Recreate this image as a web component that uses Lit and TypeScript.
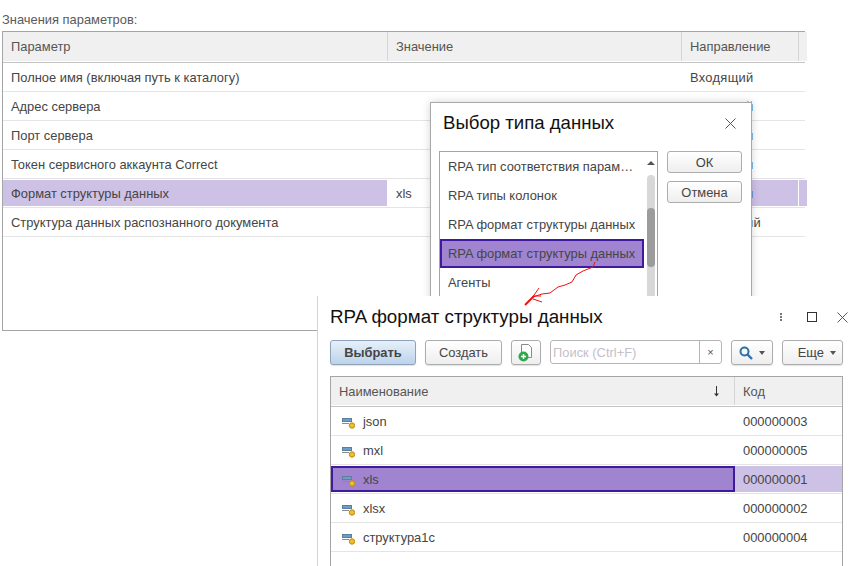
import { LitElement, html, css, svg } from "lit";
import { customElement } from "lit/decorators.js";

const params = [
  ["Полное имя (включая путь к каталогу)", "Входящий"],
  ["Адрес сервера", "Входящий"],
  ["Порт сервера", "Входящий"],
  ["Токен сервисного аккаунта Correct", "Входящий"],
  ["Формат структуры данных", "Входящий"],
  ["Структура данных распознанного документа", "Исходящий"],
];

const types = [
  "RPA тип соответствия парам…",
  "RPA типы колонок",
  "RPA формат структуры данных",
  "RPA формат структуры данных",
  "Агенты",
];

const formats = [
  ["json", "000000003"],
  ["mxl", "000000005"],
  ["xls", "000000001"],
  ["xlsx", "000000002"],
  ["структура1с", "000000004"],
];

const closeIcon = svg`<svg width="11" height="11" viewBox="0 0 11 11"><path d="M.5.5l10 10M10.5.5l-10 10" stroke="#555" fill="none"/></svg>`;

const itemIcon = html`<svg class="item-icon" width="16" height="17" viewBox="0 0 16 17">
  <rect x="3.5" y="5.5" width="9" height="3" fill="#6f9cc4" stroke="#5a7f9f"/>
  <rect x="3" y="10" width="7" height="1" fill="#8a8a8a"/>
  <circle cx="13" cy="12.5" r="2.7" fill="#f2bd2c" stroke="#b58a10"/>
</svg>`;

@customElement("app-root")
export class AppRoot extends LitElement {
  static styles = css`
    :host {
      display: block;
      position: relative;
      width: 858px;
      height: 566px;
      overflow: hidden;
      background: #fff;
      font-family: "Liberation Sans", Arial, sans-serif;
      font-size: 12.9px;
      color: #454545;
    }
    .page {
      padding: 12px 0 0 2px;
      width: 803px;
    }
    .caption {
      height: 19px;
      line-height: 15px;
      color: #5a5a5a;
    }
    .params {
      border-top: 1px solid #a5a5a5;
      border-left: 1px solid #a5a5a5;
      border-bottom: 1px solid #a5a5a5;
      box-sizing: border-box;
      height: 300px;
    }
    .row {
      display: grid;
      grid-template-columns: 385px 294px 117px 1fr;
      height: 29px;
      border-bottom: 1px solid #e4e4e4;
      box-sizing: border-box;
    }
    .row > div {
      padding-left: 8px;
      line-height: 30px;
      white-space: nowrap;
      overflow: hidden;
    }
    .row > .dir {
      letter-spacing: 0.3px;
    }
    .head {
      height: 31px;
      border-bottom: 1px solid #c4c4c4;
    }
    .head > div {
      background: #f0f0f0;
      border-right: 1px solid #d6d6d6;
      line-height: 30px;
      color: #555;
      margin-bottom: 1px;
    }
    .head > div:last-child {
      border-right: none;
    }
    .selected > div {
      background: #cdc1e6;
      margin: 1px 1px 1px 0;
      line-height: 28px;
    }
    .selected > div:last-child {
      margin-right: 0;
    }
    .selected > .current {
      background: #fff;
    }
    .dialog {
      position: absolute;
      left: 430px;
      top: 102px;
      width: 322px;
      height: 230px;
      box-sizing: border-box;
      background: #fff;
      border: 1px solid #a8a8a8;
      box-shadow: 0 0 8px rgba(0, 0, 0, 0.18);
      padding: 0 8px;
    }
    .title {
      font-size: 18.6px;
      color: #111;
      white-space: nowrap;
    }
    .dialog-head {
      display: flex;
      align-items: center;
      justify-content: space-between;
      height: 40px;
      padding: 0 7px 0 4px;
      margin-bottom: 8px;
    }
    .dialog-body {
      display: flex;
      gap: 9px;
    }
    .list {
      position: relative;
      width: 219px;
      height: 170px;
      box-sizing: border-box;
      border: 1px solid #a5a5a5;
    }
    .list-row {
      width: 204px;
      height: 29px;
      line-height: 30px;
      padding-left: 8px;
      box-sizing: border-box;
      white-space: nowrap;
    }
    .list-row.sel {
      background: #a084d0;
      outline: 2px solid #3f1a9c;
      outline-offset: -2px;
    }
    .scroll {
      position: absolute;
      left: 207px;
      top: 23px;
      width: 8px;
      height: 130px;
      border-radius: 4px;
      background: #d8d8d8;
    }
    .thumb {
      margin-top: 33px;
      height: 59px;
      border-radius: 4px;
      background: #9c9c9c;
    }
    .up {
      position: absolute;
      left: 207px;
      top: 9px;
      width: 0;
      height: 0;
      border: 4px solid transparent;
      border-top: 0;
      border-bottom: 4px solid #555;
    }
    .side {
      display: flex;
      flex-direction: column;
      gap: 8px;
    }
    .btn {
      box-sizing: border-box;
      height: 22px;
      line-height: 21px;
      text-align: center;
      border: 1px solid #adadad;
      border-radius: 3px;
      background: linear-gradient(#fff, #eee);
      color: #454545;
    }
    .side .btn {
      width: 75px;
    }
    .window {
      position: absolute;
      left: 317px;
      top: 296px;
      width: 541px;
      height: 270px;
      box-sizing: border-box;
      background: #fff;
      border-left: 1px solid #d4d4d4;
      padding-left: 12px;
    }
    .win-head {
      display: flex;
      align-items: center;
      height: 41px;
      padding-top: 1px;
      box-sizing: border-box;
    }
    .win-head .title {
      flex: 1;
      font-size: 18.8px;
    }
    .win-tools {
      display: flex;
      align-items: center;
      padding-right: 10px;
    }
    .dots {
      display: flex;
      flex-direction: column;
      gap: 1px;
      margin-right: 25px;
    }
    .dots i {
      width: 2px;
      height: 2px;
      background: #777;
    }
    .square {
      width: 8px;
      height: 8px;
      border: 1px solid #333;
      margin-right: 20px;
    }
    .toolbar {
      display: flex;
      height: 26px;
      margin: 3px 0 10px;
      gap: 9px;
    }
    .toolbar .btn {
      height: 25px;
      line-height: 24px;
      box-shadow: 0 1px 1px rgba(0, 0, 0, 0.12);
    }
    .toolbar .primary {
      width: 86px;
      font-weight: bold;
      background: linear-gradient(#e6f0fa, #bcd3ea);
      border-color: #8ea3b8;
    }
    .create {
      width: 77px;
    }
    .add {
      width: 30px;
      display: flex;
      align-items: center;
      justify-content: center;
    }
    .search {
      display: flex;
      width: 172px;
      height: 24px;
      box-sizing: border-box;
      border: 1px solid #b5b5b5;
      border-radius: 3px;
      line-height: 23px;
      color: #c4c0cc;
    }
    .search span {
      flex: 1;
      padding-left: 2px;
      white-space: nowrap;
    }
    .search b {
      width: 21px;
      border-left: 1px solid #b5b5b5;
      text-align: center;
      font-weight: normal;
      color: #555;
      font-size: 11px;
    }
    .find {
      width: 42px;
      display: flex;
      align-items: center;
      justify-content: center;
      gap: 6px;
    }
    .more {
      width: 61px;
      display: flex;
      align-items: center;
      justify-content: flex-end;
      gap: 6px;
      padding-right: 6px;
    }
    .caret {
      width: 0;
      height: 0;
      border: 3.5px solid transparent;
      border-bottom: 0;
      border-top: 4px solid #555;
    }
    .grid {
      width: 513px;
      height: 190px;
      box-sizing: border-box;
      border: 1px solid #a5a5a5;
      border-bottom: none;
    }
    .grid-row {
      display: grid;
      grid-template-columns: 404px 1fr;
      height: 29px;
      box-sizing: border-box;
      border-bottom: 1px solid #e4e4e4;
    }
    .grid-row > div {
      display: flex;
      align-items: center;
      padding: 1px 0 0 8px;
      white-space: nowrap;
    }
    .grid-head {
      height: 30px;
      border-bottom: 1px solid #c4c4c4;
    }
    .grid-head > div {
      background: #f0f0f0;
      color: #555;
      justify-content: space-between;
      margin-bottom: 1px;
      padding-top: 0;
    }
    .grid-head > div:first-child {
      border-right: 1px solid #d6d6d6;
      padding-right: 14px;
    }
    .grid-row.sel > div {
      background: #cdc1e6;
      margin: 1px 0;
    }
    .grid-row.sel > div:first-child {
      background: #a084d0;
      outline: 2px solid #3f1a9c;
      outline-offset: -2px;
    }
    .item-icon {
      margin-right: 8px;
      flex: none;
    }
    .scribble {
      position: absolute;
      left: 520px;
      top: 255px;
    }
  `;

  render() {
    return html`
      <div class="page">
        <div class="caption">Значения параметров:</div>
        <div class="params">
          <div class="row head">
            <div>Параметр</div>
            <div>Значение</div>
            <div>Направление</div>
            <div></div>
          </div>
          ${params.map(
            ([name, direction], i) => html`<div class="row ${i === 4 ? "selected" : ""}">
              <div>${name}</div>
              <div class="current">${i === 4 ? "xls" : ""}</div>
              <div class="dir">${direction}</div>
              <div></div>
            </div>`
          )}
        </div>
      </div>

      <div class="dialog">
        <div class="dialog-head">
          <span class="title">Выбор типа данных</span>
          ${closeIcon}
        </div>
        <div class="dialog-body">
          <div class="list">
            ${types.map(
              (t, i) => html`<div class="list-row ${i === 3 ? "sel" : ""}">${t}</div>`
            )}
            <div class="up"></div>
            <div class="scroll"><div class="thumb"></div></div>
          </div>
          <div class="side">
            <div class="btn">ОК</div>
            <div class="btn">Отмена</div>
          </div>
        </div>
      </div>

      <div class="window">
        <div class="win-head">
          <span class="title">RPA формат структуры данных</span>
          <div class="win-tools">
            <div class="dots"><i></i><i></i><i></i></div>
            <div class="square"></div>
            ${closeIcon}
          </div>
        </div>
        <div class="toolbar">
          <div class="btn primary">Выбрать</div>
          <div class="btn create">Создать</div>
          <div class="btn add">
            <svg width="16" height="18" viewBox="0 0 16 18">
              <path d="M3.5.5h7l3 3v10h-10z" fill="#fdfdfd" stroke="#8a8a8a"/>
              <circle cx="5.5" cy="12.5" r="5" fill="#2fa84a"/>
              <path d="M3 12.5h5M5.5 10v5" stroke="#fff" stroke-width="1.4"/>
            </svg>
          </div>
          <div class="search"><span>Поиск (Ctrl+F)</span><b>×</b></div>
          <div class="btn find">
            <svg width="14" height="14" viewBox="0 0 14 14">
              <circle cx="5.5" cy="5.5" r="4" fill="none" stroke="#2d6fa8" stroke-width="2"/>
              <path d="M8.5 8.5l4.5 4.5" stroke="#2d6fa8" stroke-width="2.4"/>
            </svg>
            <span class="caret"></span>
          </div>
          <div class="btn more">Еще <span class="caret"></span></div>
        </div>
        <div class="grid">
          <div class="grid-row grid-head">
            <div>
              Наименование
              <svg width="7" height="11" viewBox="0 0 7 11">
                <path d="M3.5 0v10" stroke="#333" fill="none"/>
                <path d="M1 7.5h5l-2.5 3z" fill="#333"/>
              </svg>
            </div>
            <div>Код</div>
          </div>
          ${formats.map(
            ([name, code], i) => html`<div class="grid-row ${i === 2 ? "sel" : ""}">
              <div>${itemIcon}${name}</div>
              <div>${code}</div>
            </div>`
          )}
        </div>
      </div>

      <svg class="scribble" width="80" height="52" viewBox="520 255 80 52">
        <path
          d="M595 262l-2 5-10 4-7 4-4 7-7 3-7 2-8 6-8 1-9 3M539 288l-7 10M542 302l-9-3M541 296h-8"
          fill="none"
          stroke="#f01010"
        />
        <path d="M534 296l-9 9" fill="none" stroke="#f01010" stroke-width="2"/>
      </svg>
    `;
  }
}
